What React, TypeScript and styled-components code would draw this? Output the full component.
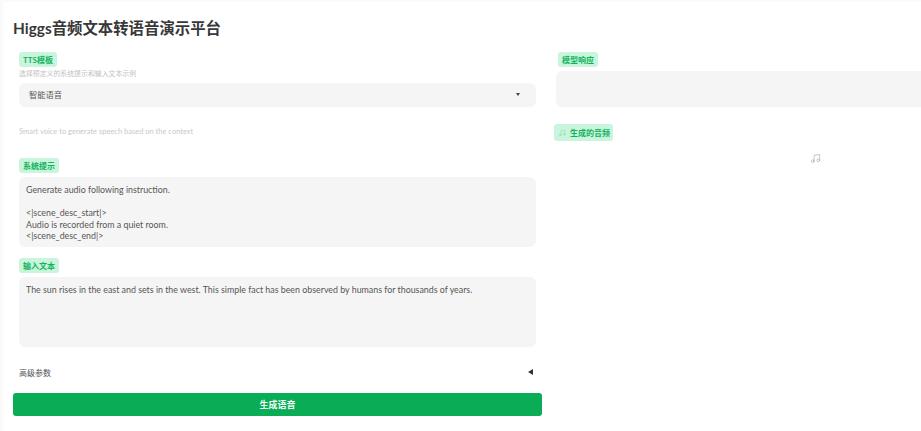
import styled, { createGlobalStyle } from 'styled-components'

const GlobalStyle = createGlobalStyle`
  html, body {
    margin: 0;
    padding: 0;
    background: #fff;
    overflow: hidden;
  }
  body {
    font-family: Lato, "Noto Sans CJK SC", sans-serif;
    color: #3a3a3a;
  }
`

const Page = styled.div`
  width: 921px;
  height: 431px;
  box-sizing: border-box;
  padding: 16px 0 0 10px;
  border-top: 2px solid #fafafa;
  border-left: 3px solid #fafafa;
  overflow: hidden;
`

const Title = styled.h1`
  margin: 0 0 13px;
  height: 21px;
  font-size: 15.4px;
  line-height: 21px;
  font-weight: 700;
  color: #383838;
`

const Columns = styled.div`
  display: flex;
  gap: 14px;
`

const LeftColumn = styled.div`
  width: 529px;
  flex: none;
  display: flex;
  flex-direction: column;
`

// runs past the window edge, as in the reference
const RightColumn = styled.div`
  width: 518px;
  flex: none;
  display: flex;
  flex-direction: column;
`

const Field = styled.div`
  padding: 0 6px;
  display: flex;
  flex-direction: column;
  align-items: flex-start;
`

const Tag = styled.span`
  display: inline-flex;
  align-items: center;
  height: 15px;
  padding: 0 4px;
  border-radius: 3px;
  background: #c9f5dc;
  color: #12b35c;
  font-size: 8px;
  font-weight: 700;
  white-space: nowrap;
`

const AudioTag = styled(Tag)`
  height: 17px;
  padding: 0 3px 0 4px;
  gap: 4px;
`

const Hint = styled.div`
  margin: 2px 0 5px;
  height: 9px;
  font-size: 6.9px;
  line-height: 9px;
  color: #c2c2c2;
`

const Select = styled.div`
  width: 517px;
  height: 24px;
  box-sizing: border-box;
  padding: 0 16px 2px 10px;
  border-radius: 6px;
  background: #f5f5f5;
  display: flex;
  align-items: center;
  justify-content: space-between;
  font-size: 8.25px;
  color: #555;
`

const SelectCaret = styled.span`
  width: 0;
  height: 0;
  border-left: 2.5px solid transparent;
  border-right: 2.5px solid transparent;
  border-top: 3px solid #444;
`

const Description = styled.div`
  margin: 20px 0 21px;
  height: 10px;
  font-size: 7.5px;
  line-height: 10px;
  color: #c8c8c8;
`

const TextBox = styled.div<{ $gapAfter: number }>`
  width: 517px;
  height: 70px;
  box-sizing: border-box;
  margin: 4px 0 ${p => p.$gapAfter}px;
  padding: 7px 7px 5px;
  border-radius: 6px;
  background: #f5f5f5;
  font-size: 8.85px;
  line-height: 11.5px;
  color: #555;
  white-space: pre-wrap;
`

const AdvancedRow = styled.div`
  width: 517px;
  height: 12px;
  margin-bottom: 15px;
  display: flex;
  align-items: center;
  justify-content: space-between;
  font-size: 8px;
  color: #555;
`

const AdvancedCaret = styled.span`
  width: 0;
  height: 0;
  margin-right: 3px;
  border-top: 3px solid transparent;
  border-bottom: 3px solid transparent;
  border-right: 5px solid #333;
`

const GenerateButton = styled.button`
  width: 529px;
  height: 23px;
  padding: 0 0 1px;
  border: 0;
  border-radius: 3px;
  background: #0aad55;
  color: #f2fff7;
  font-family: inherit;
  font-size: 9px;
  font-weight: 700;
`

const ResponseField = styled.div`
  padding-left: 2px;
  display: flex;
`

const ResponseBox = styled.div`
  height: 36px;
  margin-top: 4px;
  border-radius: 6px;
  background: #f5f5f5;
`

const AudioField = styled.div`
  margin: 17px 0 0 -2px;
  display: flex;
`

const AudioEmpty = styled.div`
  height: 34px;
  display: flex;
  align-items: center;
  justify-content: center;
  color: #b0b0b0;
`

const MusicIcon = ({ size }: { size: number }) => (
  <svg
    xmlns="http://www.w3.org/2000/svg"
    width={size}
    height={size}
    viewBox="0 0 24 24"
    fill="none"
    stroke="currentColor"
    strokeWidth="1.6"
    strokeLinecap="round"
    strokeLinejoin="round"
  >
    <path d="M9 18V5l12-2v13" />
    <circle cx="6" cy="18" r="3" />
    <circle cx="18" cy="16" r="3" />
  </svg>
)

const AudioTagIcon = styled.span`
  display: inline-flex;
  color: #8fdcb0;
`

const systemPrompt = `Generate audio following instruction.

<|scene_desc_start|>
Audio is recorded from a quiet room.
<|scene_desc_end|>`

const inputText =
  'The sun rises in the east and sets in the west. This simple fact has been observed by humans for thousands of years.'

export default function App() {
  return (
    <Page>
      <GlobalStyle />
      <Title>Higgs音频文本转语音演示平台</Title>
      <Columns>
        <LeftColumn>
          <Field>
            <Tag>TTS模板</Tag>
            <Hint>选择预定义的系统提示和输入文本示例</Hint>
            <Select>
              智能语音
              <SelectCaret />
            </Select>
            <Description>Smart voice to generate speech based on the context</Description>
            <Tag>系统提示</Tag>
            <TextBox $gapAfter={11}>{systemPrompt}</TextBox>
            <Tag>输入文本</Tag>
            <TextBox $gapAfter={19}>{inputText}</TextBox>
            <AdvancedRow>
              高级参数
              <AdvancedCaret />
            </AdvancedRow>
          </Field>
          <GenerateButton>生成语音</GenerateButton>
        </LeftColumn>
        <RightColumn>
          <ResponseField>
            <Tag>模型响应</Tag>
          </ResponseField>
          <ResponseBox />
          <AudioField>
            <AudioTag>
              <AudioTagIcon>
                <MusicIcon size={8} />
              </AudioTagIcon>
              生成的音频
            </AudioTag>
          </AudioField>
          <AudioEmpty>
            <MusicIcon size={11} />
          </AudioEmpty>
        </RightColumn>
      </Columns>
    </Page>
  )
}
